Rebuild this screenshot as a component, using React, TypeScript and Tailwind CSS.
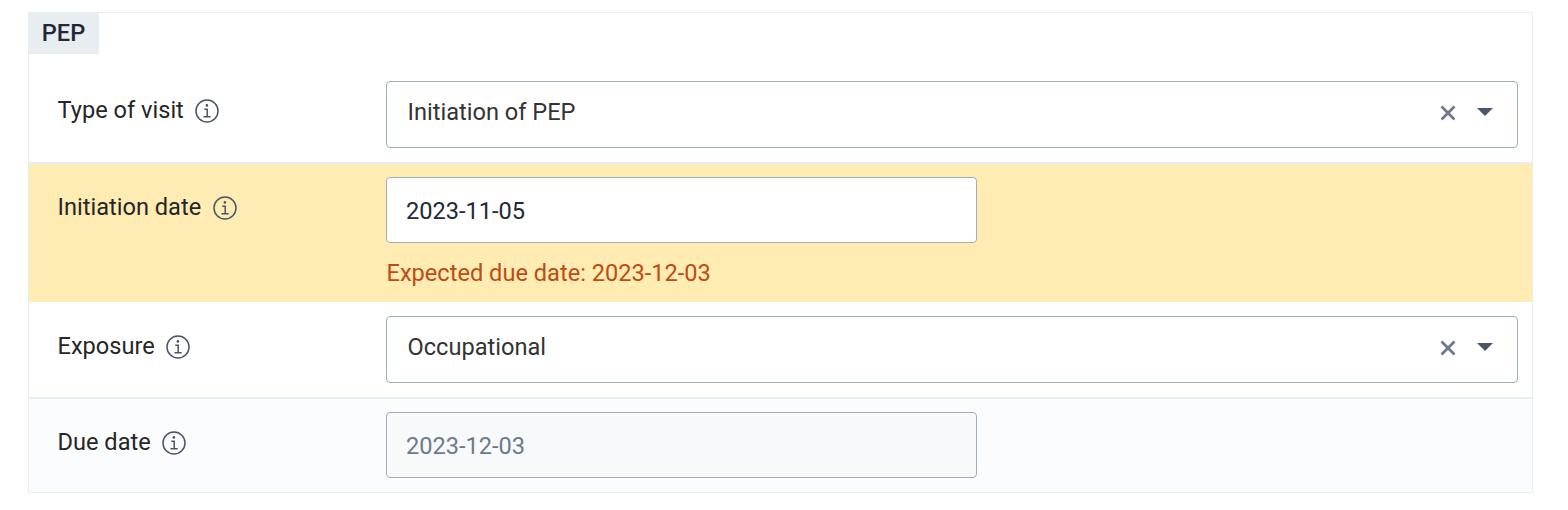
import React from "react";

function Info() {
  return (
    <svg width="24" height="24" viewBox="0 0 24 24" fill="none" stroke="#4a5568" strokeWidth="1.5" className="mt-px shrink-0">
      <circle cx="12" cy="12" r="11" />
      <path d="M9.3 10.2h2.9v7.6M8.5 17.7h7.2" />
      <circle cx="11.9" cy="6.4" r="1.3" fill="#4a5568" stroke="none" />
    </svg>
  );
}

function Label({ text }: { text: string }) {
  return (
    <div className="flex h-8 w-[329px] shrink-0 items-center gap-[11.5px] pl-[0.5px] text-[#262626]">
      <span className="whitespace-nowrap">{text}</span>
      <Info />
    </div>
  );
}

function Select({ value }: { value: string }) {
  return (
    <div className="flex h-[67px] w-[1132px] items-center rounded-[4px] border border-[#a0adba] bg-white pr-6 pb-1 pl-[20.5px]">
      <span className="-mt-0.5 grow text-[#333333]">{value}</span>
      <svg width="16" height="16" viewBox="0 0 16 16" fill="none" stroke="#6c7787" strokeWidth="2.7">
        <path d="M1.5 1.5l13 13M14.5 1.5l-13 13" />
      </svg>
      <svg width="16" height="8" viewBox="0 0 16 8" fill="#4a5768" className="-mt-0.5 ml-[21px]">
        <path d="M0 0h16L8 8z" />
      </svg>
    </div>
  );
}

export default function App() {
  return (
    <main className="h-[510px] bg-white pt-3 pl-7 font-[Roboto,sans-serif] text-[23.6px] leading-8 text-[#212934]">
      <section className="flex h-[481px] w-[1505px] flex-col border border-[#e8edf2]">
        <h2 className="-mt-px -ml-px flex h-[42px] w-[71px] items-center justify-center bg-[#e8edf2] font-medium">PEP</h2>
        <div className="flex h-[108px] pt-[27px] pl-7">
          <div className="pt-[13.4px]"><Label text="Type of visit" /></div>
          <Select value="Initiation of PEP" />
        </div>
        <div className="flex h-[140px] border-t-2 border-[#e8edf2] bg-[#ffecb3] pt-[13px] pl-7">
          <div className="pt-[14px]"><Label text="Initiation date" /></div>
          <div>
            <div className="flex h-[66px] w-[591px] items-center rounded-[4px] border border-[#a0adba] bg-white pt-[2px] pl-[19px]">2023-11-05</div>
            <p className="mt-[14px] pl-[0.5px] text-[#c04a12]">Expected due date: 2023-12-03</p>
          </div>
        </div>
        <div className="flex h-[95px] pt-[14px] pl-7">
          <div className="pt-[14px]"><Label text="Exposure" /></div>
          <Select value="Occupational" />
        </div>
        <div className="flex grow border-t-2 border-[#e8edf2] bg-[#fbfcfe] pt-[13px] pl-7">
          <div className="pt-[14px]"><Label text="Due date" /></div>
          <div className="flex h-[66px] w-[591px] items-center rounded-[4px] border border-[#a0adba] bg-[#f8f9fb] pt-[2px] pl-[19px] text-[#6e7a8a]">2023-12-03</div>
        </div>
      </section>
    </main>
  );
}
